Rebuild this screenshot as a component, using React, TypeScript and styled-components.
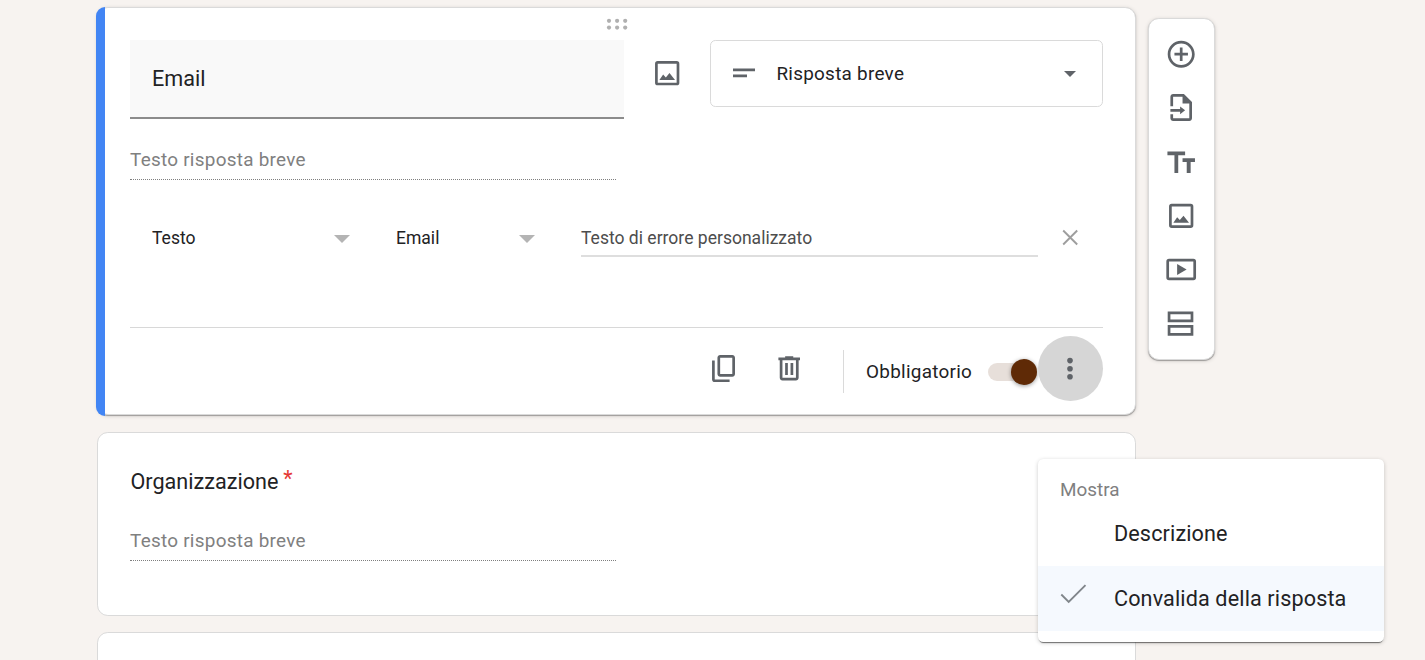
import React from "react";
import styled, { createGlobalStyle } from "styled-components";

const GlobalStyle = createGlobalStyle`
  * { box-sizing: border-box; }
  body {
    margin: 0;
    background: #f7f3f0;
    font-family: Roboto, sans-serif;
    color: #222224;
  }
`;

const Page = styled.div`
  position: relative;
  display: flex;
  align-items: flex-start;
  gap: 12px;
  height: 660px;
  padding: 7px 0 0 97px;
  overflow: hidden;
`;

const Questions = styled.main`
  display: flex;
  flex-direction: column;
  width: 1039px;
`;

const Card = styled.section<{ $height: number; $active?: boolean }>`
  position: relative;
  flex: none;
  display: flex;
  flex-direction: column;
  height: ${(p) => p.$height}px;
  margin-bottom: ${(p) => (p.$active ? 17 : 16)}px;
  padding: 0 32px;
  background: #fff;
  border: 1px solid #dadada;
  border-radius: 10.8px;
  box-shadow: ${(p) =>
    p.$active
      ? "0 1px 1px rgba(0,0,0,.3), 0 1px 4px rgba(0,0,0,.14)"
      : "none"};
`;

const ActiveStripe = styled.div`
  position: absolute;
  top: -1px;
  bottom: -2px;
  left: -2px;
  width: 9px;
  background: #4285f4;
  border-radius: 10.8px 0 0 10.8px;
`;

const DragHandle = styled.div`
  display: flex;
  justify-content: center;
  height: 32px;
  padding-top: 10px;
`;

const QuestionRow = styled.div`
  display: flex;
  align-items: flex-start;
`;

const TitleField = styled.div`
  width: 494px;
  height: 79px;
  padding-left: 22px;
  background: #f9f9f9;
  border-bottom: 2px solid #8c8c8c;
  font-size: 21.6px;
  line-height: 77px;
`;

const IconSlot = styled.div<{ $ml: number; $mt: number }>`
  flex: none;
  margin-left: ${(p) => p.$ml}px;
  margin-top: ${(p) => p.$mt}px;
  line-height: 0;
`;

const TypeSelect = styled.div`
  display: flex;
  align-items: center;
  width: 393px;
  height: 67px;
  margin-left: auto;
  padding: 0 26px 0 22px;
  border: 1px solid #dadada;
  border-radius: 5.4px;
  font-size: 18.9px;
  letter-spacing: 0.27px;
`;

const TypeLabel = styled.span`
  flex: 1;
  margin-left: 20.4px;
`;

const AnswerPreview = styled.div<{ $mt: number }>`
  width: 486px;
  height: 36px;
  margin-top: ${(p) => p.$mt}px;
  border-bottom: 1px dotted rgba(0, 0, 0, 0.5);
  color: #80807f;
  font-size: 18.9px;
  line-height: 32px;
  letter-spacing: 0.27px;
`;

const ValidationRow = styled.div`
  display: flex;
  align-items: center;
  height: 38px;
  margin-top: 39px;
  padding-left: 22px;
  font-size: 17.55px;
`;

const Dropdown = styled.div<{ $width: number; $gap: number }>`
  display: flex;
  align-items: center;
  justify-content: space-between;
  width: ${(p) => p.$width}px;
  margin-right: ${(p) => p.$gap}px;

  svg {
    margin-top: 2px;
  }
`;

const ErrorInput = styled.div`
  width: 457px;
  height: 38px;
  border-bottom: 2px solid #dedede;
  color: #4d4d4d;
  line-height: 38px;
`;

const Footer = styled.footer`
  display: flex;
  align-items: flex-start;
  justify-content: flex-end;
  height: 87px;
  margin-top: auto;
  border-top: 1px solid #d8d8d8;
`;

const Separator = styled.div`
  width: 1px;
  height: 43px;
  margin: 22px 22px 0 38px;
  background: #dadada;
`;

const RequiredLabel = styled.span`
  width: 122px;
  margin-top: 32px;
  font-size: 18.9px;
  line-height: 24px;
  letter-spacing: 0.27px;
`;

const Track = styled.div`
  display: flex;
  align-items: center;
  justify-content: flex-end;
  width: 49px;
  height: 18px;
  margin: 35px 1px 0 0;
  background: linear-gradient(to right, #e7dfda 38px, transparent 38px);
  border-radius: 9px 0 0 9px;
`;

const Thumb = styled.div`
  flex: none;
  width: 26px;
  height: 26px;
  background: #5f2a06;
  border-radius: 50%;
  box-shadow: 0 1px 4px rgba(0, 0, 0, 0.4);
`;

const MoreButton = styled.div`
  display: flex;
  align-items: center;
  justify-content: center;
  width: 65px;
  height: 65px;
  margin-top: 8px;
  background: #d6d6d6;
  border-radius: 50%;
`;

const QuestionTitle = styled.h2`
  margin: 34px 0 0;
  padding-left: 0.5px;
  font-size: 21.6px;
  font-weight: 400;
  line-height: 30px;
`;

const Asterisk = styled.span`
  position: relative;
  top: -3px;
  margin-left: 5px;
  color: #e53935;
`;

const Toolbar = styled.aside`
  display: flex;
  flex-direction: column;
  gap: 21.6px;
  width: 67px;
  height: 342px;
  margin-top: 11px;
  padding: 19px 0 0 16px;
  background: #fff;
  border: 1px solid #dadada;
  border-radius: 10.8px;
  box-shadow: 0 1px 1px rgba(0, 0, 0, 0.3), 0 1px 4px rgba(0, 0, 0, 0.14);
`;

const Menu = styled.div`
  position: absolute;
  top: 459px;
  left: 1038px;
  width: 346px;
  height: 183px;
  padding-top: 10px;
  background: #fff;
  border-radius: 5.4px;
  box-shadow: 0 2px 1px -1px rgba(0, 0, 0, 0.5), 0 1px 4px rgba(0, 0, 0, 0.2);
`;

const MenuHeading = styled.div`
  height: 32px;
  padding-left: 22px;
  color: #80807f;
  font-size: 18.9px;
  line-height: 41px;
`;

const MenuItem = styled.div<{ $checked?: boolean }>`
  display: flex;
  align-items: center;
  height: 65px;
  padding-left: 22px;
  background: ${(p) => (p.$checked ? "#f5f9fe" : "transparent")};
  font-size: 21.6px;
  letter-spacing: 0.125px;
`;

const CheckSlot = styled.span`
  width: 54px;
  margin-top: -9px;
  line-height: 0;
`;

const Svg = styled.svg`
  display: block;
  flex: none;
  overflow: visible;
`;

const Icon = ({ dy = 0, children }: { dy?: number; children: React.ReactNode }) => (
  <Svg width="32.4" height="32.4" viewBox="0 0 24 24" fill="#5f6368">
    <g transform={`translate(0 ${dy})`}>{children}</g>
  </Svg>
);

const ImageIcon = ({ dy = 0 }: { dy?: number }) => (
  <Icon dy={dy}>
    <rect x="4" y="4" width="16" height="16" rx="1" fill="none" stroke="#5f6368" strokeWidth="2" />
    <path d="M6.2 17l2.8-4 2 2.1 2.7-3.3L17.8 17z" />
  </Icon>
);

const Caret = ({ width, height, color }: { width: number; height: number; color: string }) => (
  <Svg width={width} height={height} viewBox="0 0 2 1" preserveAspectRatio="none">
    <path d="M0 0h2L1 1z" fill={color} />
  </Svg>
);

export default function App() {
  return (
    <>
      <GlobalStyle />
      <Page>
        <Questions>
          <Card $height={408} $active>
            <ActiveStripe />
            <DragHandle>
              <Svg width="22" height="14" fill="#b0b0b0">
                {[3, 11.1, 19.2].map((x) => (
                  <React.Fragment key={x}>
                    <circle cx={x} cy="2.8" r="2.1" />
                    <circle cx={x} cy="9.6" r="2.1" />
                  </React.Fragment>
                ))}
              </Svg>
            </DragHandle>
            <QuestionRow>
              <TitleField>Email</TitleField>
              <IconSlot $ml={27} $mt={17}>
                <ImageIcon />
              </IconSlot>
              <TypeSelect>
                <Svg width="23" height="9" fill="#5f6368">
                  <path d="M0-.4h22v2.7H0zM0 5.6h14v2.7H0z" />
                </Svg>
                <TypeLabel>Risposta breve</TypeLabel>
                <Caret width={12} height={6} color="#5f6368" />
              </TypeSelect>
            </QuestionRow>
            <AnswerPreview $mt={25}>Testo risposta breve</AnswerPreview>
            <ValidationRow>
              <Dropdown $width={198} $gap={46}>
                Testo
                <Caret width={16} height={8} color="#b4b4b4" />
              </Dropdown>
              <Dropdown $width={139} $gap={46}>
                Email
                <Caret width={16} height={8} color="#b4b4b4" />
              </Dropdown>
              <ErrorInput>Testo di errore personalizzato</ErrorInput>
              <IconSlot $ml={24.5} $mt={-1.5}>
                <Svg width="15" height="15" stroke="#9e9e9e" strokeWidth="1.9">
                  <path d="M.2.5l14 14M14.2.5l-14 14" />
                </Svg>
              </IconSlot>
            </ValidationRow>
            <Footer>
              <IconSlot $ml={0} $mt={24}>
                <Icon dy={0.3}>
                  <path d="M18 2H9c-1.1 0-2 .9-2 2v12c0 1.1.9 2 2 2h9c1.1 0 2-.9 2-2V4c0-1.1-.9-2-2-2zm0 14H9V4h9v12zM3 6v14c0 1.1.9 2 2 2h11v-2H5V6H3z" />
                </Icon>
              </IconSlot>
              <IconSlot $ml={32.4} $mt={24}>
                <Icon dy={0.1}>
                  <path d="M15 4V3H9v1H4v2h1v13c0 1.1.9 2 2 2h10c1.1 0 2-.9 2-2V6h1V4h-5zm2 15H7V6h10v13zM9 8h2v9H9zm4 0h2v9h-2z" />
                </Icon>
              </IconSlot>
              <Separator />
              <RequiredLabel>Obbligatorio</RequiredLabel>
              <Track>
                <Thumb />
              </Track>
              <MoreButton>
                <Svg width="7" height="24" fill="#5f6368">
                  <circle cx="3" cy="3.6" r="2.8" />
                  <circle cx="3" cy="11.7" r="2.8" />
                  <circle cx="3" cy="19.8" r="2.8" />
                </Svg>
              </MoreButton>
            </Footer>
          </Card>

          <Card $height={184}>
            <QuestionTitle>
              Organizzazione<Asterisk>*</Asterisk>
            </QuestionTitle>
            <AnswerPreview $mt={28}>Testo risposta breve</AnswerPreview>
          </Card>

          <Card $height={184} />
        </Questions>

        <Toolbar>
          <Icon>
            <path d="M13 7h-2v4H7v2h4v4h2v-4h4v-2h-4V7zm-1-5C6.48 2 2 6.48 2 12s4.48 10 10 10 10-4.48 10-10S17.52 2 12 2zm0 18c-4.41 0-8-3.59-8-8s3.59-8 8-8 8 3.59 8 8-3.59 8-8 8z" />
          </Icon>
          <Icon dy={-0.5}>
            <path d="M14 2H6c-1.1 0-2 .9-2 2v7h2V4h7v5h5v11H6v-3H4v3c0 1.1.9 2 2 2h12c1.1 0 2-.9 2-2V8z" />
            <path d="M4 13.1h7.2v-1.8l3.7 2.8-3.7 2.8v-1.8H4z" />
          </Icon>
          <Icon>
            <path d="M1.8 4h13.1v2.8H9.8V20H7V6.8H1.8zM13 9h9.2v2.9h-3.2V20h-2.9v-8.1H13z" />
          </Icon>
          <ImageIcon dy={-0.2} />
          <Icon dy={-0.5}>
            <rect x="2" y="5" width="20" height="14" rx="1" fill="none" stroke="#5f6368" strokeWidth="2" />
            <path d="M9 8v8l7-4z" />
          </Icon>
          <Icon dy={-0.4}>
            <path d="M2 3v8h19V3zm17 6H4V5h15zM2 13v8h19v-8zm17 6H4v-4h15z" />
          </Icon>
        </Toolbar>

        <Menu>
          <MenuHeading>Mostra</MenuHeading>
          <MenuItem>
            <CheckSlot />
            Descrizione
          </MenuItem>
          <MenuItem $checked>
            <CheckSlot>
              <Svg width="26" height="20" fill="none" stroke="#80868b" strokeWidth="1.9">
                <path d="M1.3 10.5l7.4 7.4L25.5 1.2" />
              </Svg>
            </CheckSlot>
            Convalida della risposta
          </MenuItem>
        </Menu>
      </Page>
    </>
  );
}
